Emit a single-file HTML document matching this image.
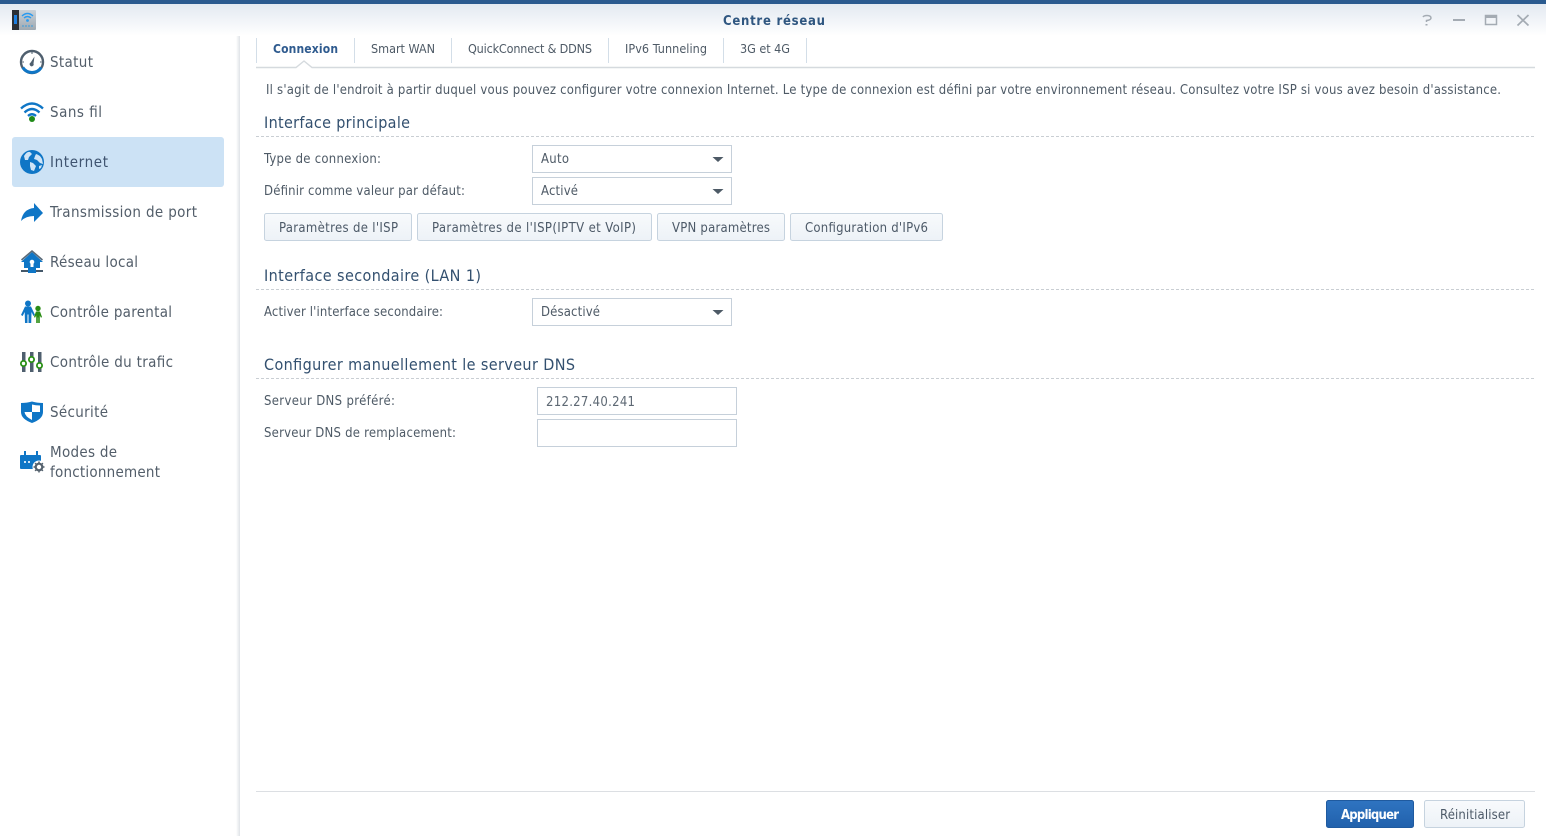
<!DOCTYPE html>
<html lang="fr"><head><meta charset="utf-8"><title>Centre réseau</title>
<style>
html,body{margin:0;padding:0;width:1546px;height:836px;overflow:hidden;background:#fff}
svg{display:block}
text{font-family:"DejaVu Sans","Liberation Sans",sans-serif;font-stretch:condensed;white-space:pre}
.s{font-size:15px;fill:#535e6a}
.t{font-size:12.5px;fill:#4e5a66}
.l{font-size:13px;fill:#4e5a66}
.h{font-size:16px;fill:#33506f}
.b{font-size:13px;fill:#4d5a68}
</style></head><body>
<svg width="1546" height="836" viewBox="0 0 1546 836" xmlns="http://www.w3.org/2000/svg">
<defs>
<linearGradient id="tb" x1="0" y1="0" x2="0" y2="1"><stop offset="0" stop-color="#e3e9f1"/><stop offset="1" stop-color="#ffffff"/></linearGradient>
<linearGradient id="bt" x1="0" y1="0" x2="0" y2="1"><stop offset="0" stop-color="#f8fafc"/><stop offset="1" stop-color="#edf2f7"/></linearGradient>
<linearGradient id="ap" x1="0" y1="0" x2="0" y2="1"><stop offset="0" stop-color="#2f74c1"/><stop offset="1" stop-color="#2161ac"/></linearGradient>
<linearGradient id="sh" x1="0" y1="0" x2="1" y2="0"><stop offset="0" stop-color="#ffffff"/><stop offset="1" stop-color="#dfe3e7"/></linearGradient>
<linearGradient id="ic" x1="0" y1="0" x2="0" y2="1"><stop offset="0" stop-color="#c9d1d8"/><stop offset="1" stop-color="#9fa9b1"/></linearGradient>
</defs>
<rect width="1546" height="836" fill="#fff"/>
<rect width="1546" height="4" fill="#2a5a8f"/>
<rect y="4" width="1546" height="32" fill="url(#tb)"/>
<!-- app icon -->
<rect x="12" y="10" width="24" height="20" rx="1" fill="url(#ic)"/>
<rect x="12" y="10" width="7" height="20" fill="#2b3036"/>
<rect x="14" y="15" width="3" height="9" fill="#1d7fe0"/>
<path d="M22 16q5.500-5 11 0M24 18q3.500-3 7 0" fill="none" stroke="#2a9bf0" stroke-width="1.400"/>
<circle cx="27.500" cy="20.500" r="1.400" fill="#2a9bf0"/>
<path d="M23 25v2M26 25v2M29 25v2M32 25v2" stroke="#3a9bdc" stroke-width="1"/>
<text x="723" y="25" textLength="102" lengthAdjust="spacing" style="font-size:13px;font-weight:700;fill:#2f5680">Centre réseau</text>
<!-- window controls -->
<path d="M1423 17q1-1.500 4-1.500 4 0 4 2.500 0 2-4.500 2.500v1.500" fill="none" stroke="#a4abb3" stroke-width="1.500"/>
<rect x="1425.500" y="24" width="2" height="1.500" fill="#a4abb3"/>
<rect x="1453" y="19" width="12" height="2" fill="#a4abb3"/>
<rect x="1485.500" y="15.500" width="11" height="9" fill="none" stroke="#a4abb3" stroke-width="1.500"/>
<rect x="1485" y="15" width="12" height="3" fill="#a4abb3"/>
<path d="M1517.500 15l11 10.500M1528.500 15l-11 10.500" stroke="#a4abb3" stroke-width="1.700"/>
<!-- sidebar -->
<rect x="236" y="36" width="4" height="800" fill="url(#sh)"/>
<rect x="12" y="137" width="212" height="50" rx="3" fill="#cce2f5"/>
<!-- statut -->
<circle cx="32" cy="62" r="11" fill="none" stroke="#4f5f6e" stroke-width="2.400"/>
<path d="M22.800 67.500A11 11 0 0 0 41.200 67.500" fill="none" stroke="#0f76c6" stroke-width="3"/>
<path d="M32 52v2M24 62h-1.500M41.500 62H40" stroke="#4f5f6e" stroke-width="1"/>
<path d="M34.500 56.500L33.500 63.500a2 2 0 1 1-2.800-1z" fill="#4f5f6e"/>
<!-- wifi -->
<path d="M21 108.500q11-10 22 0M24.500 112.500q7.500-7 15 0M28 116q4-3.500 8 0" fill="none" stroke="#0f76c6" stroke-width="2.300"/>
<circle cx="32" cy="119" r="3" fill="#1f8a17"/>
<!-- internet -->
<circle cx="32" cy="162" r="12" fill="#0f76c6"/>
<path d="M24 156q3-5 6-4l2 2-3 3-1 3-3 0zM36 154q4 1 6 5l1 5-3-1-3-3-3-1 1-3zM30 162l3 1 3 3-2 5-3-1-1-4zM39 166l3-1-1 3-2 1z" fill="#cfe4f6"/>
<!-- forward -->
<path d="M21 221q2-12 13-13v-5l9 10-9 9v-6q-8 0-13 5z" fill="#0f76c6"/>
<!-- reseau local -->
<path d="M32 252l11 10h-3v6H24v-6h-3z" fill="#0f76c6"/>
<path d="M21.500 260L32 251l10.500 9" fill="none" stroke="#5a6977" stroke-width="1.600"/>
<circle cx="32" cy="262" r="2.300" fill="#fff"/><rect x="30.500" y="264" width="3" height="3" fill="#fff"/>
<rect x="21" y="270" width="22" height="2" fill="#44586a"/>
<rect x="28" y="268" width="8" height="5" fill="#0f76c6"/>
<!-- parental -->
<circle cx="28" cy="303.500" r="3" fill="#0f76c6"/>
<path d="M21 315l4-8.500h6l4 8.500-1.500 1-2-4-.3 11h-2.700v-8.500h-1V323H25l-.3-11-2 4z" fill="#0f76c6"/>
<circle cx="38" cy="308.500" r="2.700" fill="#2a8c14"/>
<path d="M34 317l2-5.500h4l2 5.500-1 .7-1.200-2.200V323h-1.600v-5.500h-.4V323h-1.600v-7.500L35 317.700z" fill="#2a8c14"/>
<!-- trafic -->
<rect x="22" y="352" width="3.500" height="20" fill="#4f5f6e"/><rect x="30" y="352" width="3.500" height="20" fill="#4f5f6e"/><rect x="38" y="352" width="3.500" height="20" fill="#4f5f6e"/>
<circle cx="23.500" cy="363.500" r="2.600" fill="#fff" stroke="#2a9116" stroke-width="1.800"/>
<circle cx="31.500" cy="359.500" r="2.600" fill="#fff" stroke="#2a9116" stroke-width="1.800"/>
<circle cx="39.500" cy="365.500" r="2.600" fill="#fff" stroke="#2a9116" stroke-width="1.800"/>
<!-- securite -->
<path d="M21 403q6 0 11-1.500 5 1.500 11 1.500v9q0 7-11 11-11-4-11-11z" fill="#0f76c6"/>
<path d="M32 404.500q3.500 1 8 1v6.500H32zM32 412H24.500q.5 4.500 7.500 8z" fill="#fff"/>
<!-- modes -->
<rect x="20" y="455" width="21" height="14" rx="1" fill="#0f76c6"/>
<rect x="24" y="451" width="2" height="5" fill="#0f76c6"/><rect x="36" y="451" width="2" height="5" fill="#0f76c6"/>
<rect x="24" y="461" width="2" height="2" fill="#cfe4f6"/><rect x="28" y="461" width="2" height="2" fill="#cfe4f6"/>
<circle cx="39" cy="467" r="6.500" fill="#fff"/>
<circle cx="39" cy="467" r="3.300" fill="none" stroke="#55626e" stroke-width="2.200"/>
<path d="M39 461.500v2M39 470.500v2M33.500 467h2M42.500 467h2M35.100 463.100l1.400 1.400M41.500 469.500l1.400 1.400M35.100 470.900l1.400-1.400M41.500 464.500l1.400-1.400" stroke="#55626e" stroke-width="1.500"/>
<!-- sidebar labels -->
<text class="s" x="50" y="67" textLength="43" lengthAdjust="spacing">Statut</text>
<text class="s" x="50" y="117" textLength="52" lengthAdjust="spacing">Sans fil</text>
<text class="s" x="50" y="167" textLength="58" lengthAdjust="spacing" style="fill:#3f5470">Internet</text>
<text class="s" x="50" y="217" textLength="147" lengthAdjust="spacing">Transmission de port</text>
<text class="s" x="50" y="267" textLength="88" lengthAdjust="spacing">Réseau local</text>
<text class="s" x="50" y="317" textLength="122" lengthAdjust="spacing">Contrôle parental</text>
<text class="s" x="50" y="367" textLength="123" lengthAdjust="spacing">Contrôle du trafic</text>
<text class="s" x="50" y="417" textLength="58" lengthAdjust="spacing">Sécurité</text>
<text class="s" x="50" y="457" textLength="67" lengthAdjust="spacing">Modes de</text>
<text class="s" x="50" y="477" textLength="110" lengthAdjust="spacing">fonctionnement</text>
<!-- tabs -->
<path d="M256.500 38v25M354.500 38v25M451.500 38v25M608.500 38v25M723.500 38v25M806.500 38v25" stroke="#d3dee8" stroke-width="1"/>
<path d="M256 67.500H296l8-6.500 8 6.500H1535" fill="none" stroke="#d5dade" stroke-width="1.400"/>
<text x="273" y="53" textLength="65" lengthAdjust="spacing" style="font-size:12px;font-weight:700;fill:#2f5b8f">Connexion</text>
<text class="t" x="371" y="53" textLength="64" lengthAdjust="spacing">Smart WAN</text>
<text class="t" x="468" y="53" textLength="124" lengthAdjust="spacing">QuickConnect &amp; DDNS</text>
<text class="t" x="625" y="53" textLength="82" lengthAdjust="spacing">IPv6 Tunneling</text>
<text class="t" x="740" y="53" textLength="50" lengthAdjust="spacing">3G et 4G</text>
<!-- content -->
<text class="l" x="266" y="94" textLength="1235" lengthAdjust="spacing">Il s'agit de l'endroit à partir duquel vous pouvez configurer votre connexion Internet. Le type de connexion est défini par votre environnement réseau. Consultez votre ISP si vous avez besoin d'assistance.</text>
<text class="h" x="264" y="128" textLength="146" lengthAdjust="spacing">Interface principale</text>
<path d="M256 136.500H1535M256 289.500H1535M256 378.500H1535" stroke="#c9ced3" stroke-width="1" stroke-dasharray="3 2"/>
<text class="l" x="264" y="163" textLength="117" lengthAdjust="spacing">Type de connexion:</text>
<text class="l" x="264" y="195" textLength="201" lengthAdjust="spacing">Définir comme valeur par défaut:</text>
<rect x="532.500" y="145.500" width="199" height="27" fill="#fff" stroke="#c6d0da"/>
<rect x="532.500" y="177.500" width="199" height="27" fill="#fff" stroke="#c6d0da"/>
<text class="l" x="541" y="163" textLength="28" lengthAdjust="spacing">Auto</text>
<text class="l" x="541" y="195" textLength="37" lengthAdjust="spacing">Activé</text>
<path d="M712.500 157h11l-5.500 5z" fill="#4d5a66"/>
<path d="M712.500 189h11l-5.500 5z" fill="#4d5a66"/>
<g fill="url(#bt)" stroke="#c6d3df">
<rect x="264.500" y="213.500" width="147" height="27" rx="2"/>
<rect x="417.500" y="213.500" width="234" height="27" rx="2"/>
<rect x="657.500" y="213.500" width="127" height="27" rx="2"/>
<rect x="790.500" y="213.500" width="152" height="27" rx="2"/>
</g>
<text class="b" x="279" y="232" textLength="119" lengthAdjust="spacing">Paramètres de l'ISP</text>
<text class="b" x="432" y="232" textLength="204" lengthAdjust="spacing">Paramètres de l'ISP(IPTV et VoIP)</text>
<text class="b" x="672" y="232" textLength="98" lengthAdjust="spacing">VPN paramètres</text>
<text class="b" x="805" y="232" textLength="123" lengthAdjust="spacing">Configuration d'IPv6</text>
<text class="h" x="264" y="281" textLength="217" lengthAdjust="spacing">Interface secondaire (LAN 1)</text>
<text class="l" x="264" y="316" textLength="179" lengthAdjust="spacing">Activer l'interface secondaire:</text>
<rect x="532.500" y="298.500" width="199" height="27" fill="#fff" stroke="#c6d0da"/>
<text class="l" x="541" y="316" textLength="59" lengthAdjust="spacing">Désactivé</text>
<path d="M712.500 310h11l-5.500 5z" fill="#4d5a66"/>
<text class="h" x="264" y="370" textLength="311" lengthAdjust="spacing">Configurer manuellement le serveur DNS</text>
<text class="l" x="264" y="405" textLength="131" lengthAdjust="spacing">Serveur DNS préféré:</text>
<text class="l" x="264" y="437" textLength="192" lengthAdjust="spacing">Serveur DNS de remplacement:</text>
<rect x="537.500" y="387.500" width="199" height="27" fill="#fff" stroke="#c6d0da"/>
<rect x="537.500" y="419.500" width="199" height="27" fill="#fff" stroke="#c6d0da"/>
<text class="l" x="546" y="406" textLength="89" lengthAdjust="spacing" style="fill:#5e6974">212.27.40.241</text>
<!-- footer -->
<rect x="256" y="791" width="1279" height="1" fill="#dcdfe3"/>
<rect x="1326.500" y="800.500" width="87" height="27" rx="2" fill="url(#ap)" stroke="#1f5a9f"/>
<rect x="1424.500" y="800.500" width="100" height="27" rx="2" fill="url(#bt)" stroke="#c6d3df"/>
<text x="1341" y="819" textLength="58" lengthAdjust="spacing" style="font-size:13px;font-weight:700;fill:#fff">Appliquer</text>
<text class="b" x="1440" y="819" textLength="70" lengthAdjust="spacing">Réinitialiser</text>
</svg>
</body></html>
